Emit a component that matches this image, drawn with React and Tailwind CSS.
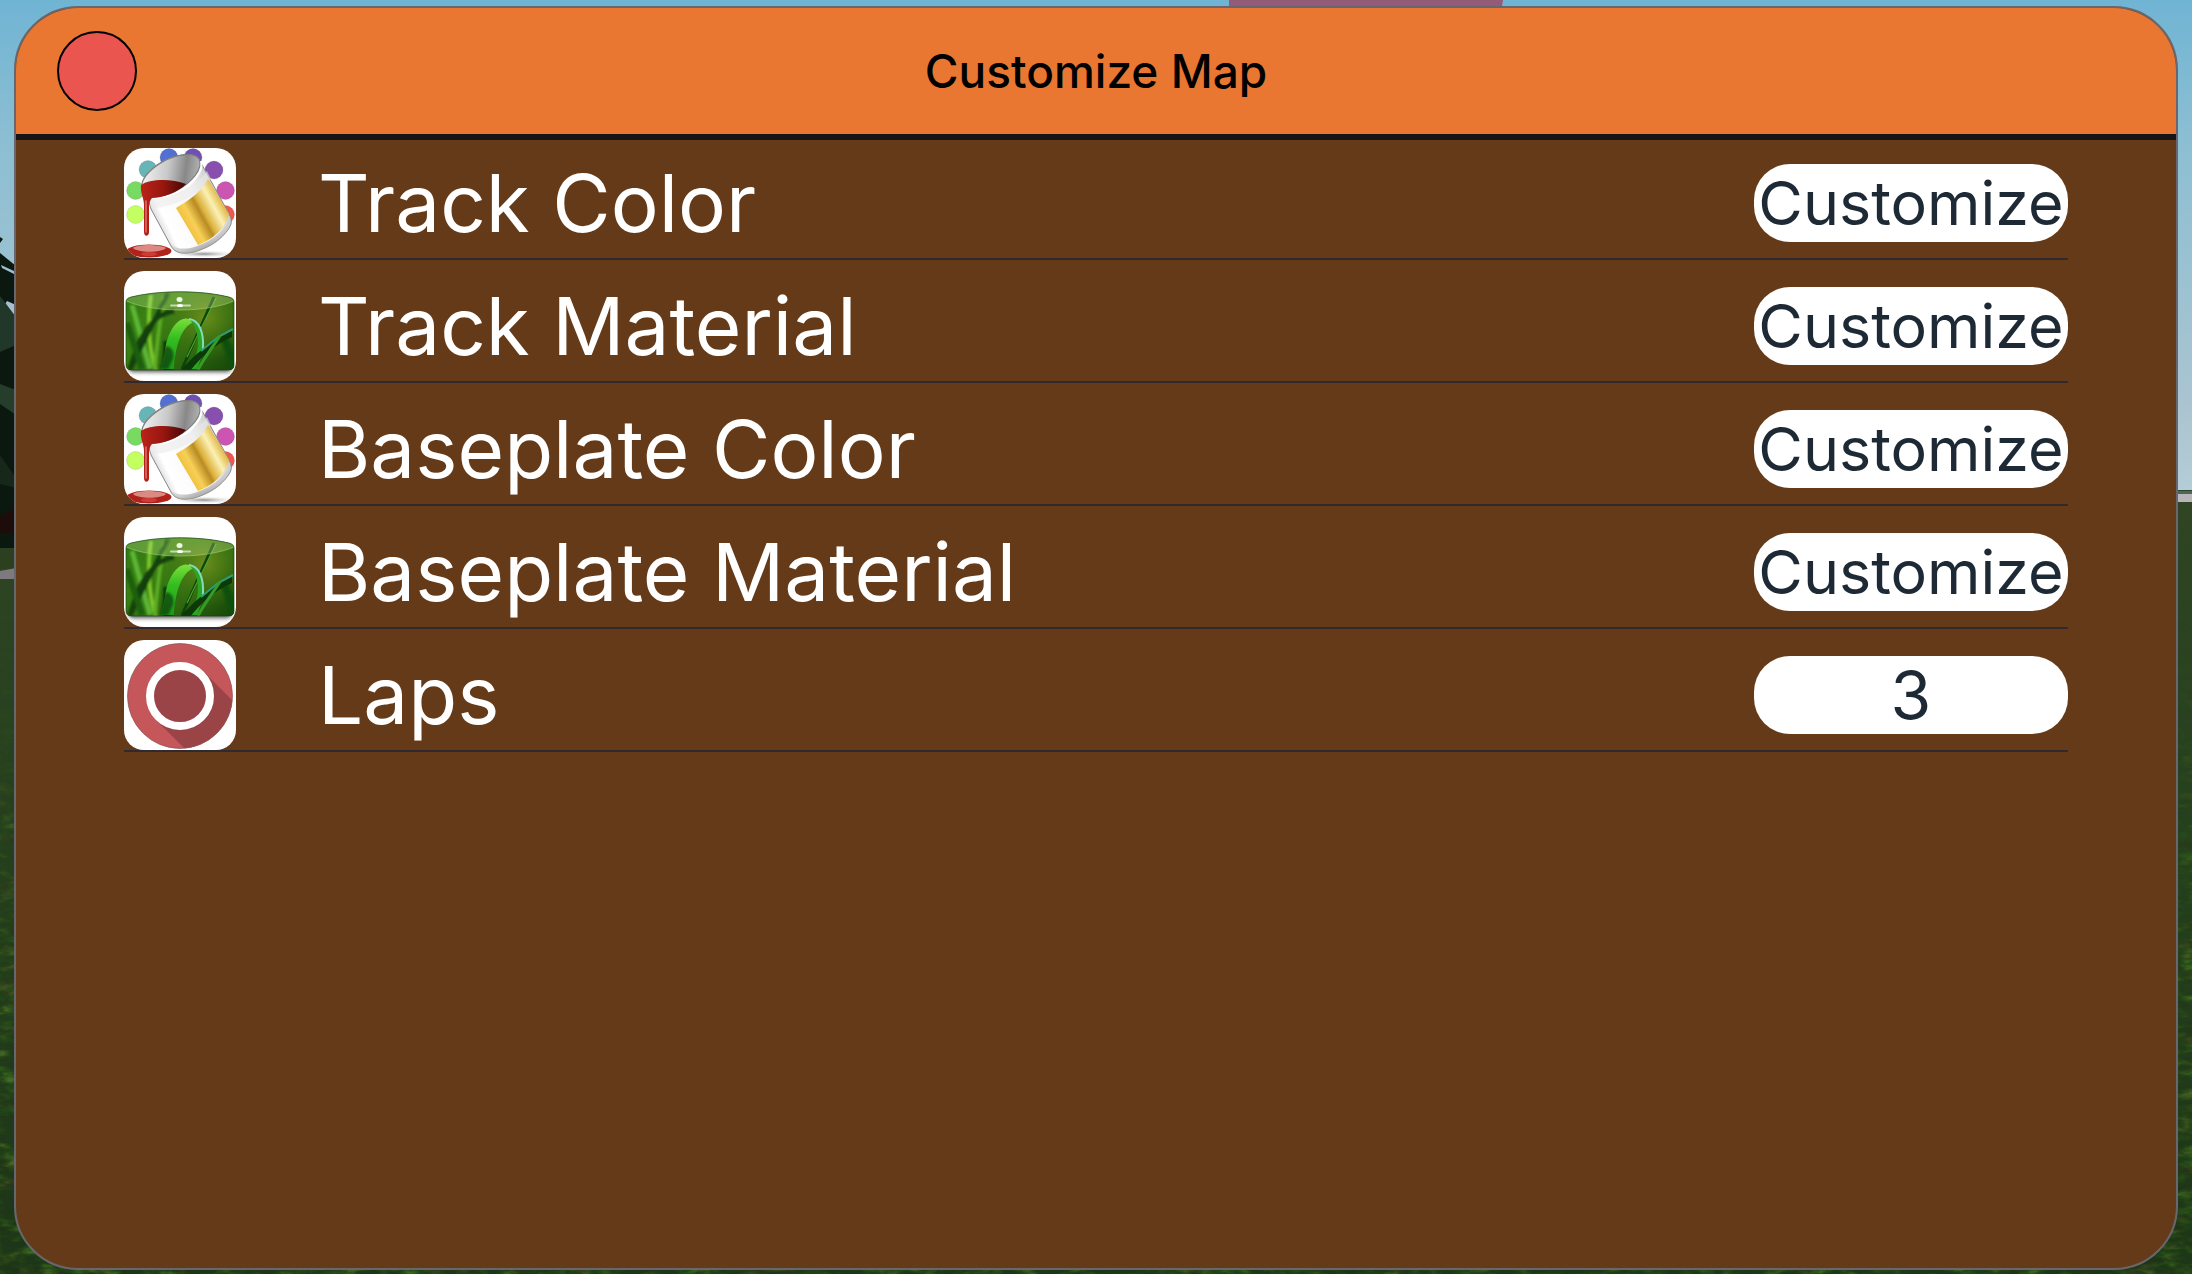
import React, { useState } from "react";

function Scenery() {
  return (
    <svg
      aria-hidden="true"
      className="absolute inset-0 h-full w-full"
      viewBox="0 0 2192 1274"
      preserveAspectRatio="none"
    >
      <defs>
        <linearGradient id="sky" x1="0" y1="0" x2="0" y2="1">
          <stop offset="0" stopColor="#70b4d3" />
          <stop offset="0.3" stopColor="#8dbfd2" />
          <stop offset="0.8" stopColor="#a9c4d0" />
          <stop offset="1" stopColor="#b5ced8" />
        </linearGradient>
        <linearGradient id="grass" x1="0" y1="0" x2="0" y2="1">
          <stop offset="0" stopColor="#2f4524" />
          <stop offset="0.45" stopColor="#26401f" />
          <stop offset="1" stopColor="#1d3518" />
        </linearGradient>
        <linearGradient id="fade" x1="0" y1="0" x2="0" y2="1">
          <stop offset="0" stopColor="#fff" stopOpacity="0" />
          <stop offset="0.5" stopColor="#fff" stopOpacity="1" />
        </linearGradient>
        <mask id="near">
          <rect y="620" width="2192" height="654" fill="url(#fade)" />
        </mask>
        <filter id="blades" x="0" y="0" width="1" height="1" colorInterpolationFilters="sRGB">
          <feTurbulence type="fractalNoise" baseFrequency="0.05 0.12" numOctaves="4" seed="4" />
          <feColorMatrix values="0.3 0 0 0 0  0.25 0.3 0 0 0  0.16 0 0 0 0  2 0 0 0 -0.6" />
        </filter>
      </defs>
      <rect width="2192" height="500" fill="url(#sky)" />
      <path d="M1229 0H1503L1501 12H1229Z" fill="#945b78" />
      <rect y="490" width="2192" height="784" fill="url(#grass)" />
      <rect x="2170" y="491" width="22" height="3" fill="#49685a" />
      <rect x="2170" y="494" width="22" height="8" fill="#b9b6bb" />
      <g mask="url(#near)">
        <rect y="620" width="2192" height="654" filter="url(#blades)" />
      </g>
      <path d="M0 253L16 266V548H0Z" fill="#0a1810" />
      <path d="M0 237L3 239L0 243Z" fill="#0d1712" />
      <path d="M1 265L14 271V274L2 268Z" fill="#9bbfcd" />
      <path d="M4 306L7 301L16 305V317L8 313Z" fill="#a7bfcb" />
      <path d="M0 296L16 317V345L0 352Z" fill="#20372a" />
      <path d="M0 384L16 390V415L0 404Z" fill="#263d2b" />
      <path d="M0 455L16 478V488L0 484Z" fill="#172719" />
      <path d="M0 515L16 508V533H0Z" fill="#1c0c0a" />
      <rect y="548" width="16" height="21" fill="#2c4020" />
      <path d="M0 571L16 568V579H0Z" fill="#7d797c" />
    </svg>
  );
}

const dots = [
  [11.6, 66.5, "#c4ff61"],
  [11.6, 42.5, "#78da63"],
  [24, 21.5, "#67b5b7"],
  [45, 9.5, "#536fd3"],
  [69, 9.5, "#7150b4"],
  [90, 22, "#894fae"],
  [101.5, 42.5, "#cb55b1"],
  [101.5, 66.5, "#f0584f"],
];

function PaintIcon({ id }) {
  return (
    <svg className="block h-full w-full" viewBox="0 0 112 110" aria-hidden="true">
      <defs>
        <linearGradient id={`${id}-body`} gradientUnits="userSpaceOnUse" x1="28" y1="76" x2="98" y2="42">
          <stop offset="0" stopColor="#c9c9c9" />
          <stop offset="0.18" stopColor="#ffffff" />
          <stop offset="0.65" stopColor="#f6f6f6" />
          <stop offset="1" stopColor="#c4c4c4" />
        </linearGradient>
        <linearGradient id={`${id}-in`} x1="0" y1="0.3" x2="1" y2="0.4">
          <stop offset="0" stopColor="#f4f4f4" />
          <stop offset="0.45" stopColor="#c8c8c8" />
          <stop offset="0.75" stopColor="#888888" />
          <stop offset="1" stopColor="#b5b5b5" />
        </linearGradient>
        <linearGradient id={`${id}-gold`} gradientUnits="userSpaceOnUse" x1="58" y1="74" x2="98" y2="52">
          <stop offset="0" stopColor="#efbe3d" />
          <stop offset="0.22" stopColor="#f7d056" />
          <stop offset="0.45" stopColor="#b98b24" />
          <stop offset="0.53" stopColor="#dcb23d" />
          <stop offset="0.77" stopColor="#fbf1b5" />
          <stop offset="1" stopColor="#dfb23b" />
        </linearGradient>
        <linearGradient id={`${id}-red`} x1="0" y1="0" x2="1" y2="0">
          <stop offset="0" stopColor="#bb231a" />
          <stop offset="0.5" stopColor="#96170f" />
          <stop offset="1" stopColor="#450605" />
        </linearGradient>
        <linearGradient id={`${id}-edge`} gradientUnits="userSpaceOnUse" x1="70" y1="83" x2="78" y2="105">
          <stop offset="0" stopColor="#bcbcbc" stopOpacity="0" />
          <stop offset="1" stopColor="#999999" />
        </linearGradient>
        <radialGradient id={`${id}-shade`}>
          <stop offset="0" stopColor="#8e8e8e" />
          <stop offset="1" stopColor="#ffffff" stopOpacity="0" />
        </radialGradient>
      </defs>
      <rect width="112" height="110" fill="#fff" />
      {dots.map(([x, y, color]) => (
        <circle key={color} cx={x} cy={y} r="9" fill={color} stroke="#000" strokeOpacity="0.14" strokeWidth="0.8" />
      ))}
      <ellipse cx="80" cy="106" rx="36" ry="4" fill={`url(#${id}-shade)`} />
      <path
        d="M19 39C21 46 25 52 27 61L47 98C51 106 61 106 70 104C88 99 103 87 107 76C108 71 106 68 104 64L76 13C72 4 59 6 46 10C31 16 17 27 19 39Z"
        fill={`url(#${id}-body)`}
        stroke="#858585"
        strokeWidth="1"
      />
      <path d="M45 94C50 101 60 102 70 99C87 94 102 82 106 69C109 77 101 88 91 95C80 102 65 107 55 105C50 104 47 99 45 94Z" fill={`url(#${id}-edge)`} />
      <path d="M25 50C40 52 75 38 83 23L87 31C76 47 48 60 27 60Z" fill="#e9e9e9" opacity="0.55" />
      <path
        d="M18 40C16 30 29 19 42 12C55 6 71 4 75 11C80 20 68 34 53 43C39 51 21 53 18 40Z"
        fill={`url(#${id}-in)`}
        stroke="#7e7e7e"
        strokeWidth="1.2"
      />
      <path d="M19 42C23 53 41 51 55 43C69 36 80 23 77 13" fill="none" stroke="#fff" strokeWidth="2" />
      <path d="M52 60C63 53 76 46 84 31L105 66C102 80 88 92 74 97Z" fill={`url(#${id}-gold)`} />
      <path
        d="M17 37C25 31 47 30 62 36C55 44 38 50 28 50C26 52 25 55 25 60V84C25 89 20 89 20 84V57C20 50 16 45 17 37Z"
        fill={`url(#${id}-red)`}
      />
      <path d="M22 53V84" stroke="#e27c74" strokeWidth="1.4" strokeLinecap="round" />
      <ellipse cx="25" cy="103" rx="22.5" ry="6.5" fill="#b2211a" />
      <path d="M9 100C13 96 36 96 42 100C37 105 14 105 9 100Z" fill="#e3a49d" opacity="0.8" />
      <ellipse cx="25" cy="106" rx="8" ry="2" fill="#db5149" opacity="0.6" />
    </svg>
  );
}

function GrassIcon({ id }) {
  return (
    <svg className="block h-full w-full" viewBox="0 0 112 110" aria-hidden="true">
      <defs>
        <linearGradient id={`${id}-bg`} x1="0" y1="0" x2="1" y2="1">
          <stop offset="0" stopColor="#2c7412" />
          <stop offset="0.35" stopColor="#3a8214" />
          <stop offset="0.65" stopColor="#2e690f" />
          <stop offset="1" stopColor="#123f08" />
        </linearGradient>
        <radialGradient id={`${id}-glow`} cx="0.72" cy="0.42" r="0.42">
          <stop offset="0" stopColor="#6d8d1c" />
          <stop offset="1" stopColor="#3e7611" stopOpacity="0" />
        </radialGradient>
        <linearGradient id={`${id}-blade`} x1="0" y1="0" x2="0" y2="1">
          <stop offset="0" stopColor="#7be03c" />
          <stop offset="0.4" stopColor="#35bd20" />
          <stop offset="1" stopColor="#1b9a17" />
        </linearGradient>
        <clipPath id={`${id}-clip`}>
          <path d="M2 31C2 28 4 27 7 26C35 19 77 19 105 26C108 27 110 28 110 31V94C110 97 108 99 105 99H7C4 99 2 97 2 94Z" />
        </clipPath>
        <filter id={`${id}-soft`}>
          <feGaussianBlur stdDeviation="1.3" />
        </filter>
        <filter id={`${id}-shadow`} x="-0.2" y="-1" width="1.4" height="3">
          <feGaussianBlur stdDeviation="2" />
        </filter>
      </defs>
      <rect width="112" height="110" fill="#fff" />
      <rect x="5" y="92" width="102" height="9" rx="4" fill="#555" filter={`url(#${id}-shadow)`} />
      <g clipPath={`url(#${id}-clip)`}>
        <rect width="112" height="110" fill={`url(#${id}-bg)`} />
        <rect width="112" height="110" fill={`url(#${id}-glow)`} />
        <g filter={`url(#${id}-soft)`} fill="none">
          <path d="M8 34L26 98" stroke="#5bb535" strokeWidth="5" />
          <path d="M27 24C23 50 25 80 32 100" stroke="#7dc72c" strokeWidth="4" />
          <path d="M40 26C36 50 32 80 31 100" stroke="#5cab20" strokeWidth="4" />
          <path d="M44 22L6 99" stroke="#0d4209" strokeWidth="4" />
          <path d="M50 40C35 42 26 52 17 68C13 76 10 88 6 98" stroke="#123f09" strokeWidth="5" />
          <path d="M3 52L18 98" stroke="#1d5e10" strokeWidth="6" />
          <path d="M44 70V100" stroke="#0a3307" strokeWidth="9" />
          <path d="M100 66L112 100" stroke="#11500c" strokeWidth="8" />
        </g>
        <path d="M90 26L58 98" stroke="#0e460a" strokeWidth="3" />
        <path d="M92 27L63 86" stroke="#4da32c" strokeWidth="1.2" />
        <path d="M65 48C55 44 43 60 41 80L37 98H50C51 75 58 55 70 51Z" fill={`url(#${id}-blade)`} />
        <path d="M66 49C76 49 82 64 79 82L73 98H63C75 89 79 63 66 49Z" fill="#2ba622" />
        <path d="M65 48C75 49 80 61 79 78" fill="none" stroke="#88d8be" strokeWidth="2" />
        <path d="M41 76C46 74 51 80 49 88L44 98H36Z" fill="#0a3a08" opacity="0.7" filter={`url(#${id}-soft)`} />
        <path d="M108 60C96 64 78 76 56 100H66C77 86 90 74 108 66Z" fill="#0b3a08" />
        <path d="M109 58L94 66L77 80" fill="none" stroke="#2d9d78" strokeWidth="2" />
        <path d="M96 65C87 78 77 92 74 99" fill="none" stroke="#379c25" strokeWidth="3" />
        <path d="M2 30C30 42 82 42 110 30V20H2Z" fill="#d7f5a0" opacity="0.27" />
        <path d="M2 30C30 42 82 42 110 30" fill="none" stroke="#a0cf75" strokeOpacity="0.6" />
      </g>
      <path
        d="M2 31C2 28 4 27 7 26C35 19 77 19 105 26C108 27 110 28 110 31V94C110 97 108 99 105 99H7C4 99 2 97 2 94Z"
        fill="none"
        stroke="#174211"
        strokeOpacity="0.65"
      />
      <ellipse cx="55.5" cy="28.5" rx="3" ry="2.5" fill="#eef6e5" />
      <rect x="46" y="33.5" width="21" height="2" rx="1" fill="#dce9d0" opacity="0.8" />
      <ellipse cx="56" cy="34.5" rx="3" ry="1.5" fill="#fff" />
    </svg>
  );
}

function RingIcon() {
  return (
    <svg className="block h-full w-full" viewBox="0 0 112 110" aria-hidden="true">
      <defs>
        <clipPath id="ring-disc">
          <circle cx="56" cy="56" r="52.5" />
        </clipPath>
      </defs>
      <rect width="112" height="110" fill="#fff" />
      <circle cx="56" cy="56" r="52.5" fill="#c5575b" />
      <path clipPath="url(#ring-disc)" d="M80 32L120 72V120H72L32 80Z" fill="#9b4448" />
      <circle cx="56" cy="56" r="52.5" fill="none" stroke="#8a5557" strokeOpacity="0.7" />
      <circle cx="56" cy="56" r="30" fill="#9b4448" stroke="#fff" strokeWidth="8" />
    </svg>
  );
}

const rows = [
  { label: "Track Color", icon: <PaintIcon id="track-paint" /> },
  { label: "Track Material", icon: <GrassIcon id="track-grass" /> },
  { label: "Baseplate Color", icon: <PaintIcon id="base-paint" /> },
  { label: "Baseplate Material", icon: <GrassIcon id="base-grass" /> },
];

function Row({ icon, children, control }) {
  return (
    <li className="flex items-center border-b-2 border-[#302a30]">
      <div className="h-[110px] w-28 shrink-0 overflow-hidden rounded-[20px]">{icon}</div>
      <div className="ml-[82px] flex-1 text-[80px] leading-[110px] text-white">{children}</div>
      {control}
    </li>
  );
}

export default function App() {
  const [laps, setLaps] = useState("3");
  return (
    <div className="relative flex min-h-screen overflow-hidden px-3.5 pt-1.5 pb-1 font-['Inter',sans-serif]">
      <Scenery />
      <main className="relative flex flex-1 flex-col overflow-hidden rounded-[64px] border-2 border-[#68676f] bg-[#653a18]">
        <header className="grid h-[132px] grid-cols-[1fr_auto_1fr] items-center border-b-6 border-[#151515] bg-[#e97732] px-[41px]">
          <button
            type="button"
            aria-label="Close"
            className="size-20 rounded-full border-2 border-black bg-[#ea554f]"
          />
          <h1 className="text-[46px] leading-[60px] font-medium text-black">Customize Map</h1>
        </header>
        <ul className="mt-2 flex flex-col gap-[11px] px-[5%]">
          {rows.map(({ label, icon }) => (
            <Row
              key={label}
              icon={icon}
              control={
                <button
                  type="button"
                  aria-label={`Customize ${label}`}
                  className="h-[78px] w-[314px] rounded-[36px] bg-white text-center text-[61px] leading-[78px] whitespace-nowrap text-[#1d2a35]"
                >
                  Customize
                </button>
              }
            >
              {label}
            </Row>
          ))}
          <Row
            icon={<RingIcon />}
            control={
              <input
                id="laps"
                type="text"
                inputMode="numeric"
                value={laps}
                onChange={(e) => setLaps(e.target.value)}
                className="h-[78px] w-[314px] rounded-[36px] bg-white text-center text-[66px] leading-[78px] text-[#1d2a35]"
              />
            }
          >
            <label htmlFor="laps">Laps</label>
          </Row>
        </ul>
      </main>
    </div>
  );
}
